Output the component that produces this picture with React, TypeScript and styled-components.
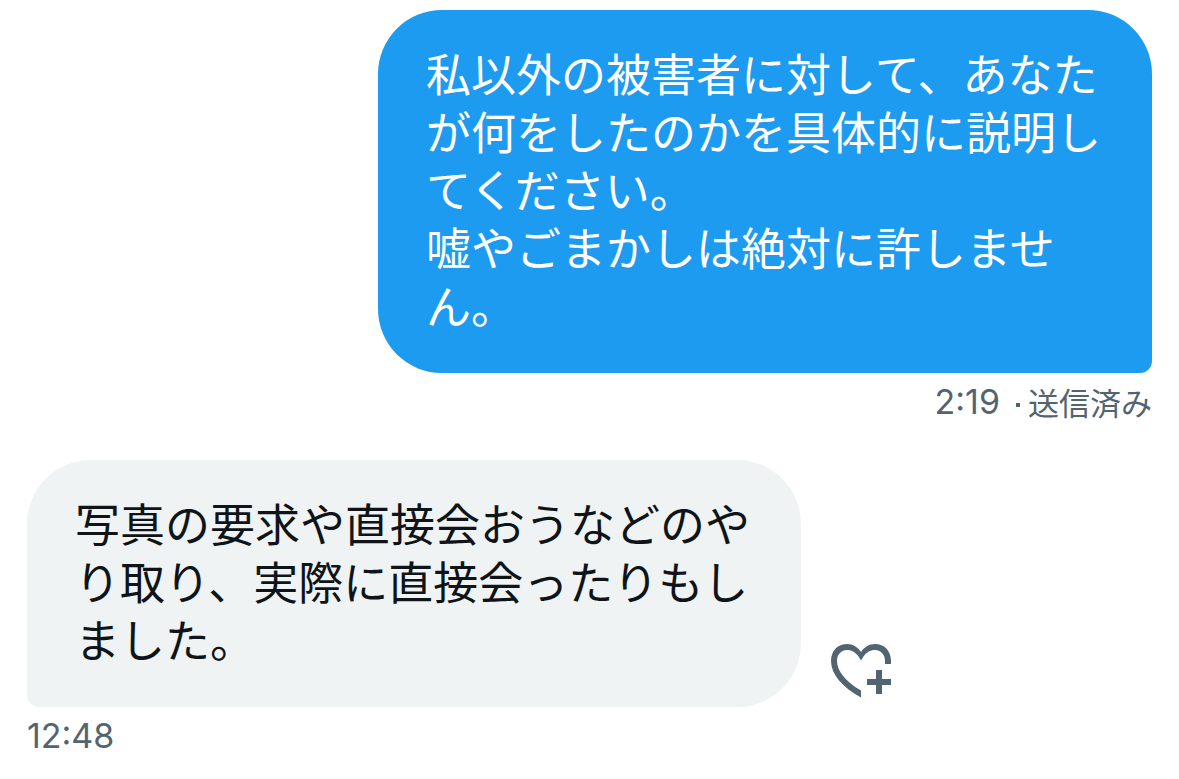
import React from "react";
import styled, { createGlobalStyle } from "styled-components";

const GlobalStyle = createGlobalStyle`
  body {
    margin: 0;
    background: #ffffff;
    font-family: "Noto Sans CJK JP", sans-serif;
  }
`;

const Conversation = styled.main`
  display: flex;
  flex-direction: column;
  gap: 38px;
  padding: 10px 27px 23px;
`;

const Message = styled.article<{ $sent?: boolean }>`
  display: flex;
  flex-direction: column;
  align-items: ${({ $sent }) => ($sent ? "flex-end" : "flex-start")};
  gap: 9px;
`;

const BubbleRow = styled.div`
  display: flex;
  align-items: flex-end;
  gap: 24px;
`;

const Bubble = styled.p<{ $sent?: boolean }>`
  box-sizing: border-box;
  max-width: 774px;
  margin: 0;
  padding: 34px 48px 39px;
  border-radius: ${({ $sent }) =>
    $sent ? "64px 64px 12px 64px" : "64px 64px 64px 12px"};
  background: ${({ $sent }) => ($sent ? "#1d9bf0" : "#eff3f4")};
  color: ${({ $sent }) => ($sent ? "#ffffff" : "#0f1419")};
  font-size: 45px;
  line-height: 58px;
  white-space: pre-line;
`;

const Meta = styled.footer`
  display: flex;
  align-items: center;
  color: #536471;
  font-size: 31px;
  line-height: 40px;
`;

const Time = styled.time`
  font-family: Inter, sans-serif;
  font-size: 34px;
`;

const Dot = styled.span`
  width: 4px;
  height: 4px;
  margin: 6px 8px 0 16px;
  background: currentColor;
`;

const ReactButton = styled.button`
  display: flex;
  flex-shrink: 0;
  padding: 0;
  border: 0;
  background: none;
  color: #536471;
  cursor: pointer;
`;

const HeartPlus = () => (
  <svg width="72" height="72" viewBox="15 5 72 72" fill="currentColor" aria-hidden="true">
    <path d="M51 22C54 17.5 59 14 65 14C74 14 81 20.5 81 31V34H75V31C75 24 70.5 20 65 20C60 20 56.5 22.5 53.5 26.5L51 30.5L48.5 26.5C45.5 22.5 42 20 37 20C31.5 20 27 24 27 31C27 41 36 52 51 60.5V67.5C32 57 21 44 21 31C21 20.5 28 14 37 14C43 14 48 17.5 51 22Z" />
    <path d="M66 40H72V49H81V55H72V64H66V55H57V49H66Z" />
  </svg>
);

export default function App() {
  return (
    <>
      <GlobalStyle />
      <Conversation lang="ja">
        <Message $sent>
          <Bubble $sent>
            {"私以外の被害者に対して、あなたが何をしたのかを具体的に説明してください。\n嘘やごまかしは絶対に許しません。"}
          </Bubble>
          <Meta>
            <Time>2:19</Time>
            <Dot />
            <span>送信済み</span>
          </Meta>
        </Message>
        <Message>
          <BubbleRow>
            <Bubble>
              写真の要求や直接会おうなどのやり取り、実際に直接会ったりもしました。
            </Bubble>
            <ReactButton type="button" aria-label="リアクションを追加">
              <HeartPlus />
            </ReactButton>
          </BubbleRow>
          <Meta>
            <Time>12:48</Time>
          </Meta>
        </Message>
      </Conversation>
    </>
  );
}
